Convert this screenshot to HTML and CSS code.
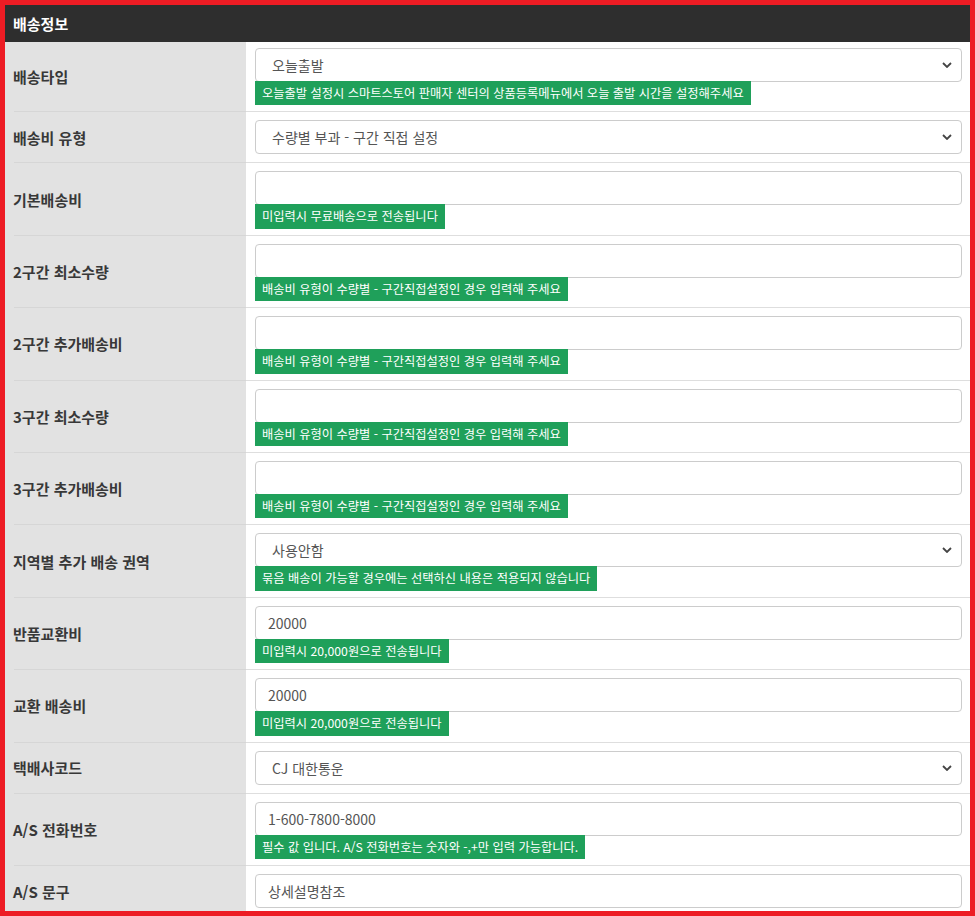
FILE: index.html
```html
<!DOCTYPE html>
<html lang="ko">
<head>
    <meta charset="UTF-8">
    <meta name="viewport" content="width=device-width, initial-scale=1.0">
    <title>배송정보</title>
    <link rel="stylesheet" href="styles.css">
</head>
<body>
    <div class="frame">
        <div class="panel-head">배송정보</div>

        <table class="form-table">
            <tbody>
                <tr class="first-row">
                    <th>배송타입</th>
                    <td>
                        <select class="form-control">
                            <option>오늘출발</option>
                        </select>
                        <span class="help">오늘출발 설정시 스마트스토어 판매자 센터의 상품등록메뉴에서 오늘 출발 시간을 설정해주세요</span>
                    </td>
                </tr>
                <tr>
                    <th>배송비 유형</th>
                    <td>
                        <select class="form-control">
                            <option>수량별 부과 - 구간 직접 설정</option>
                        </select>
                    </td>
                </tr>
                <tr>
                    <th>기본배송비</th>
                    <td>
                        <input type="text" class="form-control" value="">
                        <span class="help">미입력시 무료배송으로 전송됩니다</span>
                    </td>
                </tr>
                <tr>
                    <th>2구간 최소수량</th>
                    <td>
                        <input type="text" class="form-control" value="">
                        <span class="help">배송비 유형이 수량별 - 구간직접설정인 경우 입력해 주세요</span>
                    </td>
                </tr>
                <tr>
                    <th>2구간 추가배송비</th>
                    <td>
                        <input type="text" class="form-control" value="">
                        <span class="help">배송비 유형이 수량별 - 구간직접설정인 경우 입력해 주세요</span>
                    </td>
                </tr>
                <tr>
                    <th>3구간 최소수량</th>
                    <td>
                        <input type="text" class="form-control" value="">
                        <span class="help">배송비 유형이 수량별 - 구간직접설정인 경우 입력해 주세요</span>
                    </td>
                </tr>
                <tr>
                    <th>3구간 추가배송비</th>
                    <td>
                        <input type="text" class="form-control" value="">
                        <span class="help">배송비 유형이 수량별 - 구간직접설정인 경우 입력해 주세요</span>
                    </td>
                </tr>
                <tr>
                    <th>지역별 추가 배송 권역</th>
                    <td>
                        <select class="form-control">
                            <option>사용안함</option>
                        </select>
                        <span class="help">묶음 배송이 가능할 경우에는 선택하신 내용은 적용되지 않습니다</span>
                    </td>
                </tr>
                <tr>
                    <th>반품교환비</th>
                    <td>
                        <input type="text" class="form-control" value="20000">
                        <span class="help">미입력시 20,000원으로 전송됩니다</span>
                    </td>
                </tr>
                <tr>
                    <th>교환 배송비</th>
                    <td>
                        <input type="text" class="form-control" value="20000">
                        <span class="help">미입력시 20,000원으로 전송됩니다</span>
                    </td>
                </tr>
                <tr>
                    <th>택배사코드</th>
                    <td>
                        <select class="form-control">
                            <option>CJ 대한통운</option>
                        </select>
                    </td>
                </tr>
                <tr>
                    <th>A/S 전화번호</th>
                    <td>
                        <input type="text" class="form-control" value="1-600-7800-8000">
                        <span class="help">필수 값 입니다. A/S 전화번호는 숫자와 -,+만 입력 가능합니다.</span>
                    </td>
                </tr>
                <tr>
                    <th>A/S 문구</th>
                    <td>
                        <input type="text" class="form-control" value="상세설명참조">
                    </td>
                </tr>
            </tbody>
        </table>
    </div>
</body>
</html>
```

FILE: styles.css
```css
html, body {
    margin: 0;
    padding: 0;
    background: #fff;
}
body {
    font-family: "Noto Sans CJK KR", "Noto Sans", sans-serif;
    color: #333;
}
.frame {
    box-sizing: border-box;
    width: 975px;
    height: 916px;
    border: 5px solid #ed1c24;
    overflow: hidden;
}
.panel-head {
    height: 37px;
    line-height: 37px;
    padding: 0 8px;
    background: #2e2e2e;
    color: #fff;
    font-size: 15px;
    font-weight: 700;
}
.form-table {
    width: 100%;
    border-collapse: separate;
    border-spacing: 0;
}
.form-table th {
    width: 225px;
    padding: 0 8px;
    text-align: left;
    vertical-align: middle;
    font-size: 15px;
    font-weight: 700;
    color: #383838;
    border-top: 1px solid transparent;
    /* row line in the label column starts a bit in from the edge */
    background: linear-gradient(#d6d6d6, #d6d6d6) 9px 0 / 100% 1px no-repeat border-box, #e2e2e2;
}
.form-table td {
    padding: 8px 8px 8px 9px;
    vertical-align: top;
    border-top: 1px solid #dedede;
    font-size: 0;
    line-height: 0;
}
.form-table .first-row th {
    border-top: 0;
    background: #e2e2e2;
}
.form-table .first-row td {
    border-top: 0;
    padding-top: 6px;
}
.form-control {
    display: block;
    box-sizing: border-box;
    width: 100%;
    height: 34px;
    margin: 0;
    padding: 6px 12px;
    font-family: inherit;
    font-size: 14px;
    line-height: 20px;
    color: #555;
    background-color: #fff;
    border: 1px solid #ccc;
    border-radius: 4px;
    outline: none;
}
select.form-control {
    appearance: none;
    -webkit-appearance: none;
    padding-left: 16px;
    background-image: url("data:image/svg+xml,%3Csvg xmlns='http://www.w3.org/2000/svg' viewBox='0 0 10 6'%3E%3Cpath d='M1 1l4 4 4-4' fill='none' stroke='%23444' stroke-width='1.8'/%3E%3C/svg%3E");
    background-repeat: no-repeat;
    background-position: right 9px center;
    background-size: 10px 6px;
}
.help {
    display: block;
    width: fit-content;
    margin: -1px 0 -2px;
    padding: 3px 7px;
    line-height: 18.4px;
    font-size: 12.25px;
    color: #fff;
    background: #1fa05a;
    white-space: nowrap;
}
```
